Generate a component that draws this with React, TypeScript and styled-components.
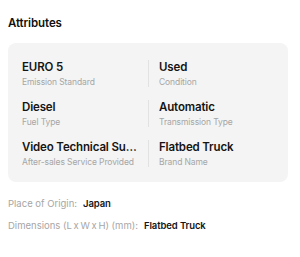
import React from 'react';
import styled, { createGlobalStyle } from 'styled-components';

const GlobalStyle = createGlobalStyle`
  body {
    margin: 0;
    background: #ffffff;
    font-family: Inter, 'Noto Sans', sans-serif;
    -webkit-font-smoothing: antialiased;
  }
`;

const Wrapper = styled.div`
  padding: 15px 12px 0 8px;
`;

const Title = styled.h3`
  margin: 0 0 12px;
  font-size: 11.5px;
  line-height: 16px;
  font-weight: 600;
  letter-spacing: -0.1px;
  color: #111111;
`;

const Card = styled.div`
  background: #f4f4f4;
  border-radius: 8px;
  padding: 17px 14px 15px;
  display: grid;
  grid-template-columns: 1fr 1fr;
  row-gap: 13px;
`;

const Cell = styled.div<{ $divided?: boolean }>`
  display: flex;
  flex-direction: column;
  gap: 3px;
  min-width: 0;
  padding-left: ${(p) => (p.$divided ? '10px' : '0')};
  padding-right: ${(p) => (p.$divided ? '0' : '11px')};
  border-left: ${(p) => (p.$divided ? '1px solid #e2e2e2' : 'none')};
`;

const Value = styled.div`
  font-size: 11.5px;
  line-height: 14px;
  font-weight: 600;
  letter-spacing: -0.15px;
  color: #151515;
  white-space: nowrap;
  overflow: hidden;
  text-overflow: ellipsis;
`;

const Label = styled.div`
  font-size: 8.5px;
  line-height: 10px;
  letter-spacing: -0.1px;
  color: #a6a6a6;
  white-space: nowrap;
`;

const Details = styled.div`
  margin-top: 15px;
  display: flex;
  flex-direction: column;
  gap: 8px;
`;

const DetailRow = styled.div`
  display: flex;
  gap: 6px;
  font-size: 9.5px;
  line-height: 14px;
`;

const DetailKey = styled.span`
  color: #a6a6a6;
`;

const DetailValue = styled.span`
  color: #151515;
  font-weight: 600;
  letter-spacing: -0.1px;
`;

const attributes = [
  { value: 'EURO 5', label: 'Emission Standard' },
  { value: 'Used', label: 'Condition' },
  { value: 'Diesel', label: 'Fuel Type' },
  { value: 'Automatic', label: 'Transmission Type' },
  { value: 'Video Technical Support', label: 'After-sales Service Provided' },
  { value: 'Flatbed Truck', label: 'Brand Name' },
];

const details = [
  { key: 'Place of Origin:', value: 'Japan' },
  { key: 'Dimensions (L\u2009x\u2009W\u2009x\u2009H) (mm):', value: 'Flatbed Truck' },
];

const App = () => {
  return (
    <Wrapper>
      <GlobalStyle />
      <Title>Attributes</Title>
      <Card>
        {attributes.map((a, i) => (
          <Cell key={a.label} $divided={i % 2 === 1}>
            <Value>{a.value}</Value>
            <Label>{a.label}</Label>
          </Cell>
        ))}
      </Card>
      <Details>
        {details.map((d) => (
          <DetailRow key={d.key}>
            <DetailKey>{d.key}</DetailKey>
            <DetailValue>{d.value}</DetailValue>
          </DetailRow>
        ))}
      </Details>
    </Wrapper>
  );
};

export default App;
